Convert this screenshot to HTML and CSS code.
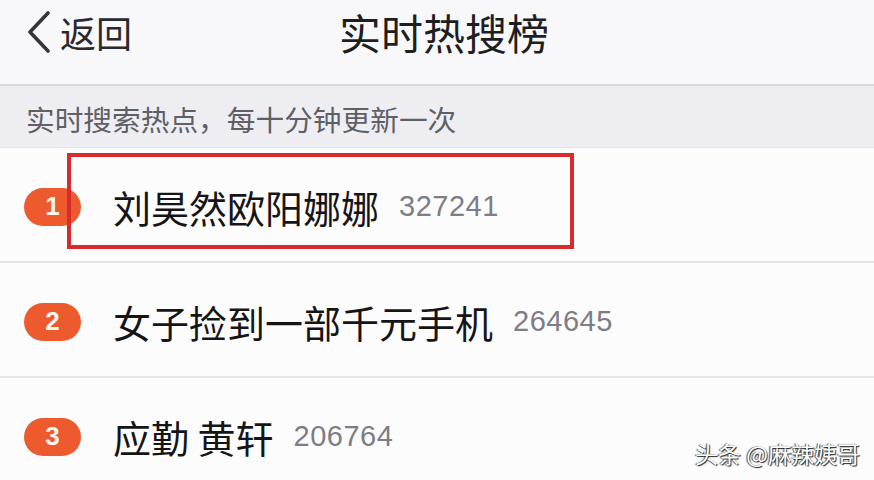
FILE: index.html
```html
<!DOCTYPE html>
<html lang="zh-CN">
<head>
    <meta charset="UTF-8">
    <meta name="viewport" content="width=device-width, initial-scale=1.0">
    <title>实时热搜榜</title>
    <link rel="stylesheet" href="styles.css">
</head>
<body>
    <div class="page">
        <header class="nav">
            <a class="nav-back">
                <svg class="chevron" viewBox="0 0 24 42" width="24" height="42">
                    <path d="M21 2 L3 21 L21 40" fill="none" stroke="#36363a" stroke-width="3.6" stroke-linecap="round" stroke-linejoin="round"/>
                </svg>
                <span>返回</span>
            </a>
            <h1 class="nav-title">实时热搜榜</h1>
            <div></div>
        </header>

        <div class="section-tip">实时搜索热点，每十分钟更新一次</div>

        <ul class="hot-list">
            <li class="hot-item">
                <span class="rank">1</span>
                <span class="keyword">刘昊然欧阳娜娜</span>
                <span class="count">327241</span>
                <div class="mark-box"></div>
            </li>
            <li class="hot-item">
                <span class="rank">2</span>
                <span class="keyword">女子捡到一部千元手机</span>
                <span class="count">264645</span>
            </li>
            <li class="hot-item">
                <span class="rank">3</span>
                <span class="keyword">应勤 黄轩</span>
                <span class="count">206764</span>
            </li>
        </ul>

        <div class="watermark">头条 @麻辣姨哥</div>
    </div>
</body>
</html>
```

FILE: styles.css
```css
* {
    margin: 0;
    padding: 0;
    box-sizing: border-box;
}

body {
    font-family: "Noto Sans CJK SC", "Noto Sans", sans-serif;
    background: #fcfcfd;
    color: #1c1c1e;
}

.page {
    position: relative;
    width: 874px;
    height: 480px;
    overflow: hidden;
}

.nav {
    display: grid;
    grid-template-columns: 1fr auto 1fr;
    align-items: start;
    height: 84px;
    padding-top: 9px;
    background: #f8f8fa;
}

.nav-back {
    display: flex;
    align-items: center;
    padding-left: 27px;
    color: #2a2a2e;
    font-size: 36px;
    line-height: 46px;
}

.chevron {
    margin-right: 9px;
}

.nav-title {
    font-size: 42px;
    font-weight: 400;
    line-height: 46px;
    color: #1e1e22;
    padding-left: 14px;
}

.section-tip {
    display: flex;
    align-items: flex-end;
    height: 64px;
    padding: 0 0 10px 26px;
    border-top: 2px solid #d9d9de;
    border-bottom: 1px solid #e6e6ea;
    background: #eeeef2;
    color: #5f5f66;
    font-size: 28.7px;
    line-height: 36px;
}

.hot-list {
    list-style: none;
}

.hot-item {
    position: relative;
    display: flex;
    align-items: center;
    height: 115px;
    padding: 4px 0 0 24px;
    border-bottom: 2px solid #e4e4e8;
    background: #fcfcfd;
}

.rank {
    display: flex;
    justify-content: center;
    align-items: center;
    width: 57px;
    height: 38px;
    margin-right: 32px;
    border-radius: 19px;
    background: #ec5a2e;
    color: #fff6ee;
    font-family: "Liberation Sans", sans-serif;
    font-size: 26px;
    font-weight: bold;
}

.keyword {
    font-size: 38px;
    line-height: 48px;
    color: #151517;
}

.count {
    margin-left: 20px;
    font-family: "Liberation Sans", sans-serif;
    font-size: 29px;
    color: #7d7d85;
    letter-spacing: 0.5px;
}

.mark-box {
    position: absolute;
    left: 67px;
    top: 5px;
    width: 507px;
    height: 96px;
    border: 4px solid #d92b2e;
}

.watermark {
    position: absolute;
    right: 14px;
    bottom: 10px;
    font-size: 23px;
    color: #ffffff;
    text-shadow: 1px 1px 1px #222, -1px 0 1px #444;
}
```
